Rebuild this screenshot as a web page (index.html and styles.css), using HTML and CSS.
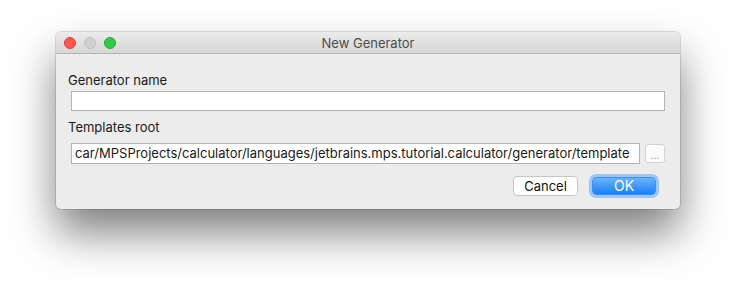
FILE: index.html
```html
<!DOCTYPE html>
<html lang="en">
<head>
    <meta charset="UTF-8">
    <title>New Generator</title>
    <link rel="stylesheet" href="styles.css">
</head>
<body>
    <div class="window">
        <div class="titlebar">
            <div class="lights">
                <span class="light close"></span>
                <span class="light min"></span>
                <span class="light zoom"></span>
            </div>
            <div class="window-title">New Generator</div>
        </div>

        <div class="content">
            <div class="label first">Generator name</div>
            <div class="field-row">
                <div class="text-field"></div>
            </div>

            <div class="label">Templates root</div>
            <div class="field-row last">
                <div class="text-field path">car/MPSProjects/calculator/languages/jetbrains.mps.tutorial.calculator/generator/template</div>
                <div class="browse">...</div>
            </div>

            <div class="actions">
                <div class="btn">Cancel</div>
                <div class="btn primary">OK</div>
            </div>
        </div>
    </div>
</body>
</html>
```

FILE: styles.css
```css
html, body {
    height: 100%;
}

body {
    margin: 0;
    padding-top: 32px;
    box-sizing: border-box;
    background: #ffffff;
    font-family: Inter, "Liberation Sans", Arial, sans-serif;
    font-size: 13px;
    color: #1a1a1a;
}

.window {
    width: 624px;
    height: 177px;
    margin: 0 auto;
    background: #ececec;
    border-radius: 5px;
    box-shadow: 0 0 0 1px rgba(0,0,0,0.12), 0 24px 44px rgba(0,0,0,0.5);
    overflow: hidden;
}

.titlebar {
    height: 21px;
    position: relative;
    background: linear-gradient(#ebebeb, #d6d6d6);
    border-bottom: 1px solid #b4b4b4;
    display: flex;
    align-items: center;
    justify-content: center;
}

.lights {
    position: absolute;
    left: 8px;
    top: 5px;
    display: flex;
    gap: 8px;
}

.light {
    width: 12px;
    height: 12px;
    border-radius: 50%;
    box-sizing: border-box;
}

.light.close { background: #fc5753; border: 1px solid #df3e3a; }
.light.min { background: #d0d0d0; border: 1px solid #bdbdbd; }
.light.zoom { background: #34c84a; border: 1px solid #24a938; }

.window-title {
    color: #4d4d4d;
    font-size: 13px;
    padding-top: 1px;
}

.content {
    padding: 17px 15px 0 12px;
}

.label {
    height: 18px;
    line-height: 18px;
    margin-bottom: 7px;
}

.label.first {
    margin-bottom: 2px;
}

.field-row {
    display: flex;
    align-items: center;
    gap: 5px;
    padding-left: 3px;
    margin-bottom: 7px;
}

.field-row.last {
    margin-bottom: 12px;
}

.text-field {
    flex: 1;
    height: 20px;
    box-sizing: border-box;
    background: #fff;
    border: 1px solid #b3b3b3;
    line-height: 18px;
    padding: 0 3px;
    white-space: nowrap;
    overflow: hidden;
}

.text-field.path {
    height: 21px;
    line-height: 19px;
}

.browse {
    width: 20px;
    height: 19px;
    box-sizing: border-box;
    background: #fbfbfb;
    border: 1px solid #d4d4d4;
    border-radius: 3px;
    color: #a8a8a8;
    font-size: 11px;
    text-align: center;
    line-height: 20px;
}

.actions {
    display: flex;
    justify-content: flex-end;
    align-items: center;
    gap: 14px;
    padding-right: 9px;
}

.btn {
    width: 65px;
    height: 20px;
    box-sizing: border-box;
    background: #fff;
    border: 1px solid #c6c6c6;
    border-radius: 4px;
    text-align: center;
    line-height: 18px;
    color: #111;
}

.btn.primary {
    width: 64px;
    height: 18px;
    background: linear-gradient(#6cb3fa, #1a7ff7);
    border: 1px solid #3d8ef5;
    box-shadow: 0 0 0 3px #9dc6f7;
    color: #fff;
    font-size: 14px;
    line-height: 16px;
}
```
